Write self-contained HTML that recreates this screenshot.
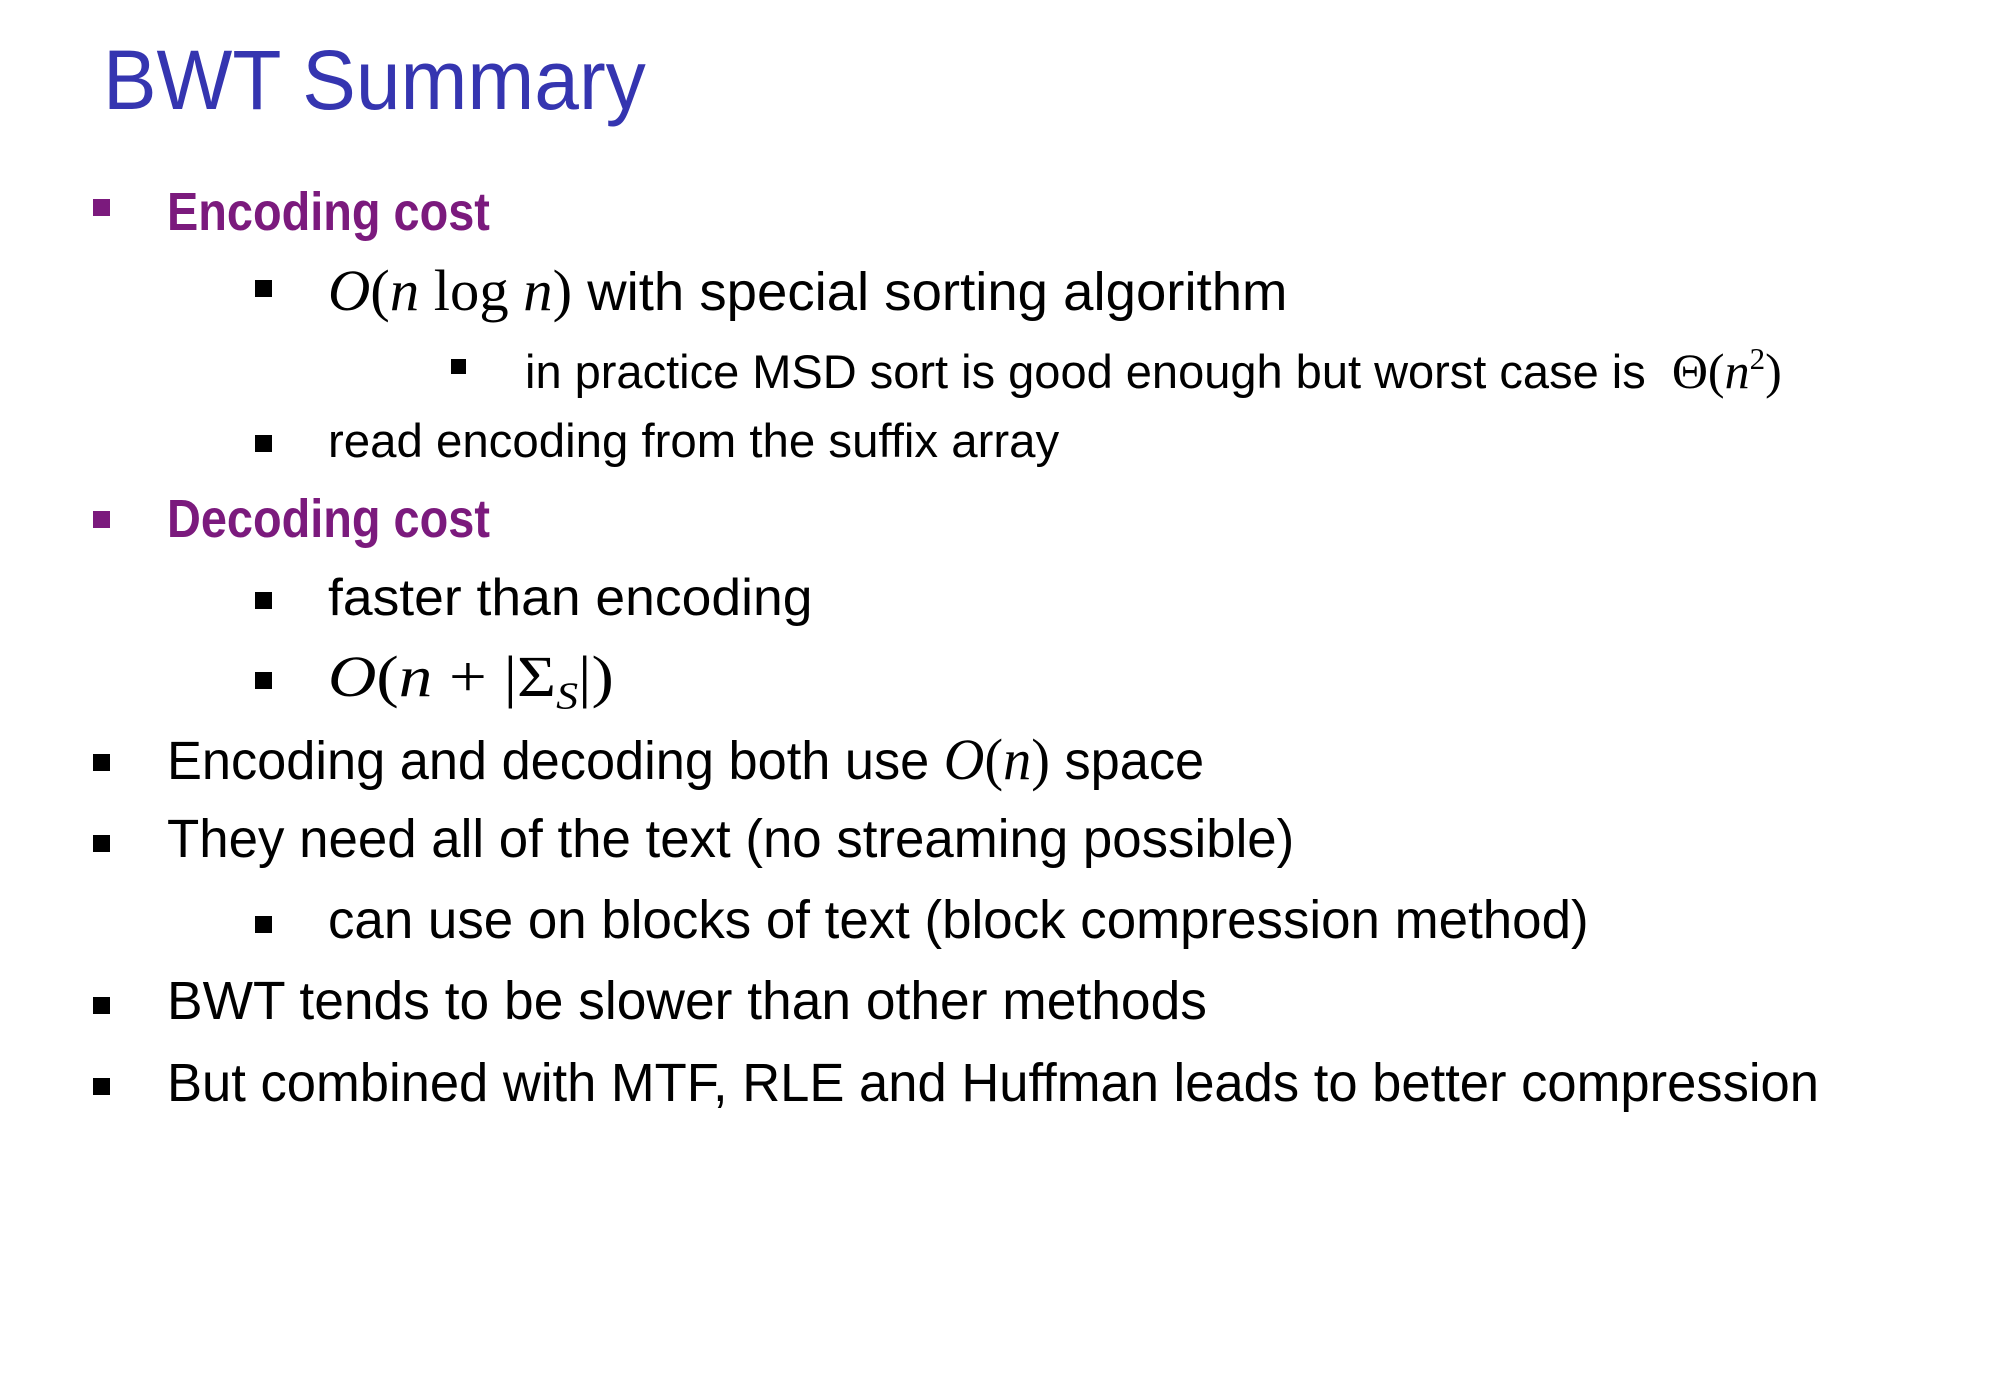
<!DOCTYPE html>
<html><head><meta charset="utf-8"><style>
html,body{margin:0;padding:0;background:#fff;width:2006px;height:1390px;overflow:hidden;position:relative}
.t{position:absolute;white-space:nowrap;font-family:"Liberation Sans",sans-serif;line-height:1;transform-origin:0 0;color:#000}
.b{position:absolute;background:#000}
.p{background:#7b1a7d}
.m{font-family:"Liberation Serif",serif}
.i{font-family:"Liberation Serif",serif;font-style:italic}
</style></head><body>
<div class="t" style="left:103px;top:38px;font-size:84px;color:#3535b0;transform:scaleX(0.956)">BWT Summary</div>

<div class="b p" style="left:93px;top:199px;width:17px;height:17px"></div>
<div class="t" style="left:167px;top:185px;font-size:54px;font-weight:bold;color:#7b1a7d;transform:scaleX(0.868)">Encoding cost</div>

<div class="b" style="left:255px;top:280px;width:17px;height:17px"></div>
<div class="t" style="left:328px;top:262px;font-size:54px;transform:scaleX(1.01)"><span class="i" style="font-size:58px">O</span><span class="m" style="font-size:58px">(<i>n</i> log <i>n</i>)</span> with special sorting algorithm</div>

<div class="b" style="left:451px;top:359px;width:15px;height:15px"></div>
<div class="t" style="left:525px;top:343px;font-size:47px;transform:scaleX(1.0)">in practice MSD sort is good enough but worst case is &nbsp;<span class="m" style="font-size:50px">Θ(<i>n</i><sup style="font-size:31px;vertical-align:19px">2</sup>)</span></div>

<div class="b" style="left:255px;top:435px;width:17px;height:17px"></div>
<div class="t" style="left:328px;top:417px;font-size:47px;transform:scaleX(1.008)">read encoding from the suffix array</div>

<div class="b p" style="left:93px;top:511px;width:17px;height:17px"></div>
<div class="t" style="left:167px;top:492px;font-size:54px;font-weight:bold;color:#7b1a7d;transform:scaleX(0.868)">Decoding cost</div>

<div class="b" style="left:255px;top:592px;width:17px;height:17px"></div>
<div class="t" style="left:328px;top:572px;font-size:52px;transform:scaleX(1.028)">faster than encoding</div>

<div class="b" style="left:255px;top:672px;width:17px;height:17px"></div>
<div class="t m" style="left:328px;top:648px;font-size:58px;transform:scaleX(1.156)"><i>O</i>(<i>n</i> + |Σ<sub style="font-size:38px"><i>S</i></sub>|)</div>

<div class="b" style="left:93px;top:754px;width:17px;height:17px"></div>
<div class="t" style="left:167px;top:731px;font-size:54px;transform:scaleX(0.969)">Encoding and decoding both use <span class="i" style="font-size:58px">O</span><span class="m" style="font-size:58px">(<i>n</i>)</span> space</div>

<div class="b" style="left:93px;top:835px;width:17px;height:17px"></div>
<div class="t" style="left:167px;top:812px;font-size:54px;transform:scaleX(0.978)">They need all of the text (no streaming possible)</div>

<div class="b" style="left:255px;top:916px;width:17px;height:17px"></div>
<div class="t" style="left:328px;top:893px;font-size:54px;transform:scaleX(0.979)">can use on blocks of text (block compression method)</div>

<div class="b" style="left:93px;top:997px;width:17px;height:17px"></div>
<div class="t" style="left:167px;top:974px;font-size:54px;transform:scaleX(0.988)">BWT tends to be slower than other methods</div>

<div class="b" style="left:93px;top:1078px;width:17px;height:17px"></div>
<div class="t" style="left:167px;top:1056px;font-size:54px;transform:scaleX(0.973)">But combined with MTF, RLE and Huffman leads to better compression</div>
</body></html>
